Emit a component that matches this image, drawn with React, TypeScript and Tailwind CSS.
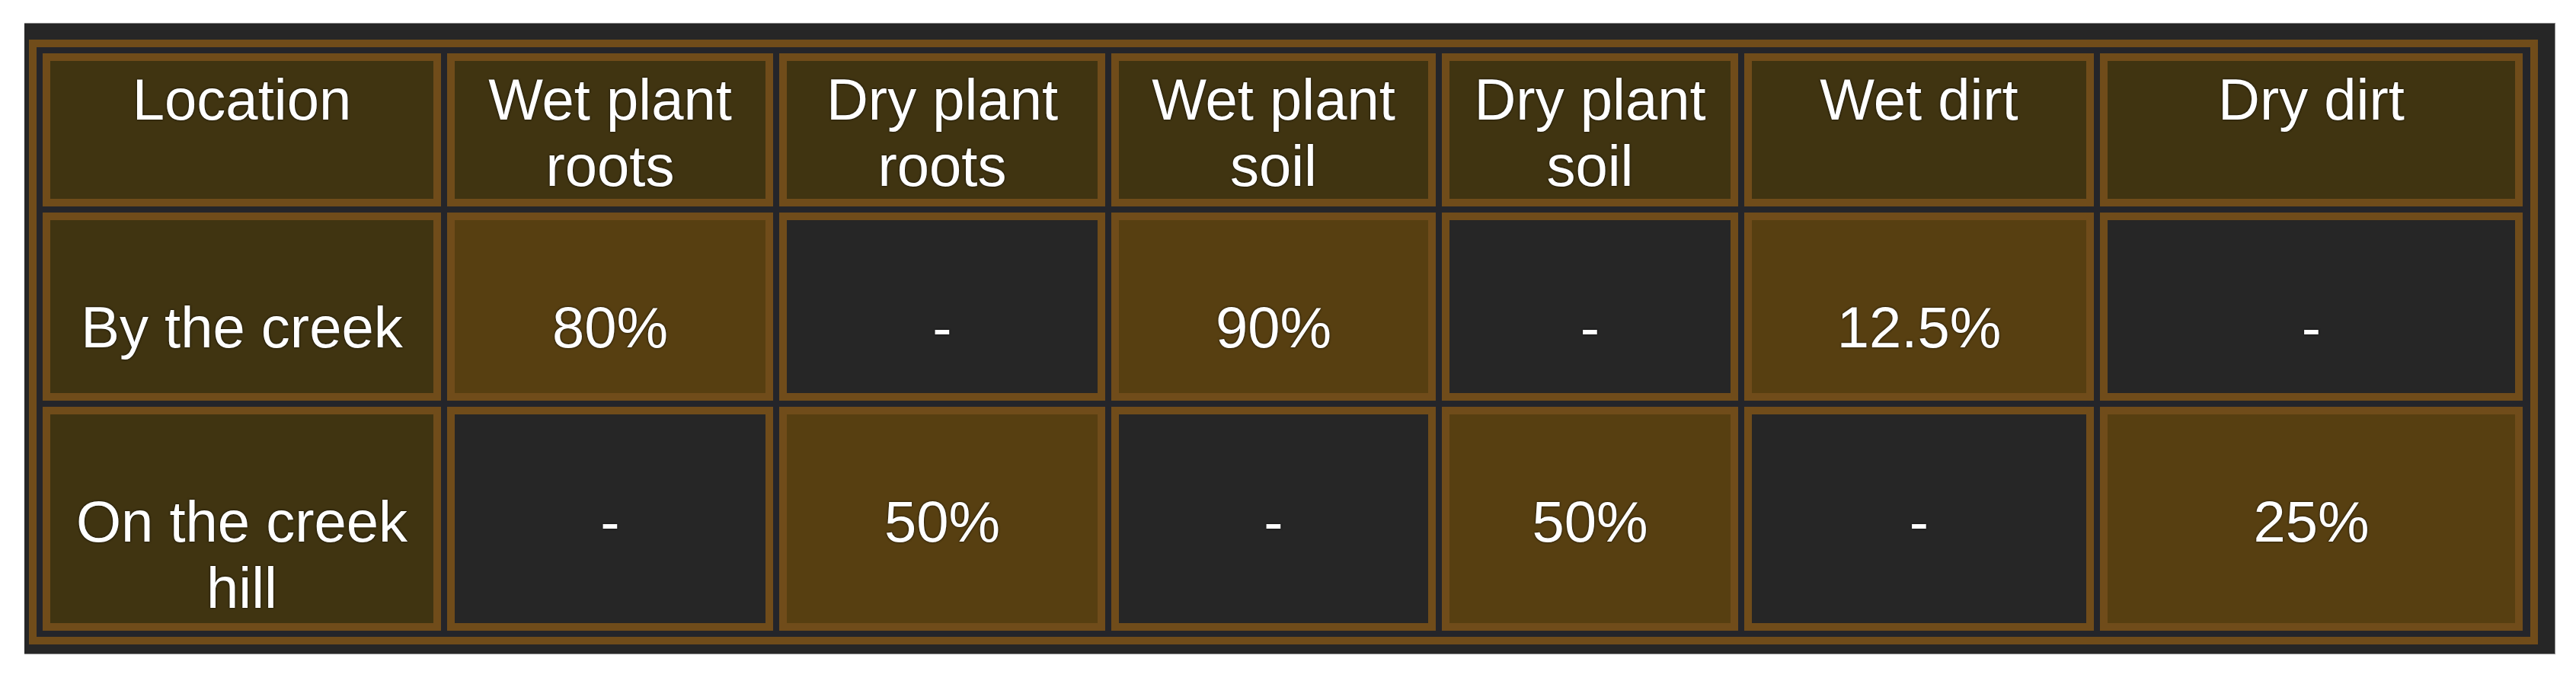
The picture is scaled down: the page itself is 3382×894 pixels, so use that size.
type Tone = 'head' | 'value' | 'empty'

const TONE_BG: Record<Tone, string> = {
  head: 'bg-[#403411]',
  value: 'bg-[#573f11]',
  empty: 'bg-[#262626]',
}

type Cell = { lines: string[]; tone: Tone }

const header: Cell[] = [
  { lines: ['Location'], tone: 'head' },
  { lines: ['Wet plant', 'roots'], tone: 'head' },
  { lines: ['Dry plant', 'roots'], tone: 'head' },
  { lines: ['Wet plant', 'soil'], tone: 'head' },
  { lines: ['Dry plant', 'soil'], tone: 'head' },
  { lines: ['Wet dirt'], tone: 'head' },
  { lines: ['Dry dirt'], tone: 'head' },
]

const rows: Cell[][] = [
  [
    { lines: ['By the creek'], tone: 'head' },
    { lines: ['80%'], tone: 'value' },
    { lines: ['-'], tone: 'empty' },
    { lines: ['90%'], tone: 'value' },
    { lines: ['-'], tone: 'empty' },
    { lines: ['12.5%'], tone: 'value' },
    { lines: ['-'], tone: 'empty' },
  ],
  [
    { lines: ['On the creek', 'hill'], tone: 'head' },
    { lines: ['-'], tone: 'empty' },
    { lines: ['50%'], tone: 'value' },
    { lines: ['-'], tone: 'empty' },
    { lines: ['50%'], tone: 'value' },
    { lines: ['-'], tone: 'empty' },
    { lines: ['25%'], tone: 'value' },
  ],
]

function TableCell({ cell, isHeader }: { cell: Cell; isHeader: boolean }) {
  return (
    <div
      className={`border-[10px] border-[#704c1a] text-center text-white ${TONE_BG[cell.tone]} ${
        isHeader ? 'pt-[7px]' : 'pt-[97px]'
      }`}
    >
      {cell.lines.map((line) => (
        <div key={line} className="whitespace-nowrap">
          {line}
        </div>
      ))}
    </div>
  )
}

export default function App() {
  return (
    <div className="min-h-screen bg-white pl-[32px] pt-[30px]">
      <div className="h-[829px] w-[3323px] border-y border-r border-[#8c8c8c] bg-[#262626] pl-[6px] pt-[21px]">
        <div
          className="grid w-[3294px] grid-cols-[523px_428px_428px_426px_389px_459px_555px] grid-rows-[201px_247px_294px] gap-2 border-[10px] border-[#704c1a] bg-[#24252a] p-2 text-[76px] leading-[1.15] [font-family:'Liberation_Sans',Arial,sans-serif] [text-shadow:0_0_3px_rgba(0,0,0,0.9)]"
        >
          {header.map((c, i) => (
            <TableCell key={`h${i}`} cell={c} isHeader />
          ))}
          {rows.map((row, r) =>
            row.map((c, i) => <TableCell key={`r${r}c${i}`} cell={c} isHeader={false} />),
          )}
        </div>
      </div>
    </div>
  )
}
